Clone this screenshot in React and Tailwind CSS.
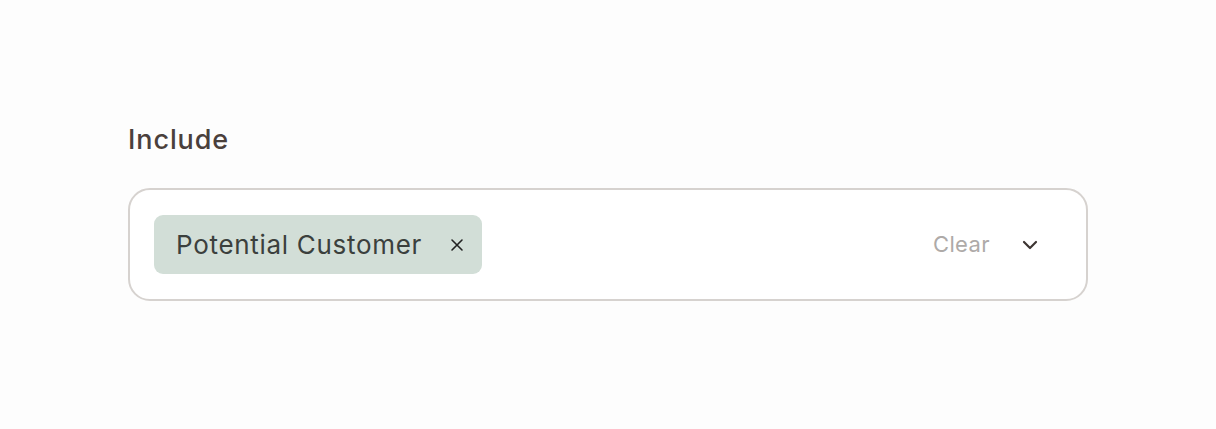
export default function App() {
  return (
    <div className="min-h-screen bg-[#fdfdfd] px-32 pt-[122px] font-['Inter',sans-serif]">
      <div className="w-[960px]">
        <label className="block text-[27px] font-medium leading-[36px] tracking-[0.9px] text-[#4a403c]">Include</label>
        <div className="mt-[30px] flex h-[113px] items-center rounded-[22px] border-2 border-[#d6d2cf] bg-white pl-[24px] pr-[48px]">
          <span className="flex h-[59px] items-center gap-[28px] rounded-[9px] bg-[#d2ded7] pl-[22px] pr-[18px] text-[26px] tracking-[0.7px] text-[#3b403d]">
            Potential Customer
            <svg width="14" height="14" viewBox="0 0 14 14" fill="none" stroke="#222" strokeWidth="1.6" strokeLinecap="round">
              <path d="M2 2l10 10M12 2L2 12" />
            </svg>
          </span>
          <span className="ml-auto mr-[1px] text-[22px] tracking-[0.4px] text-[#aeaaa8]">Clear</span>
          <svg className="ml-[31px]" width="16" height="10" viewBox="0 0 16 10" fill="none" stroke="#3d3532" strokeWidth="2.2" strokeLinecap="round" strokeLinejoin="round">
            <path d="M2 2l6 6 6-6" />
          </svg>
        </div>
      </div>
    </div>
  );
}
